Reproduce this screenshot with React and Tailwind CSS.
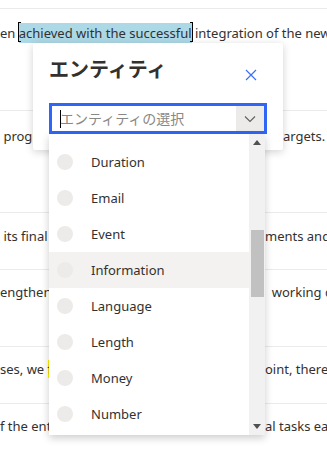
import React from 'react';

const rows = [
  { h: 'h-[102px]', pt: 'pt-[14px]', full: true },
  { h: 'h-[102px]', pt: 'pt-[15px]', left: ' progress toward', lw: 'w-[33px]', right: 'argets. The team', rw: 'w-[44px]' },
  { h: 'h-[57px]', pt: 'pt-[13px]', left: ' its final', lw: 'w-[49px]', right: 'ments and confirmed', rw: 'w-[62px]' },
  { h: 'h-[77px]', pt: 'pt-[12px]', left: 'engthened', lw: 'w-[49px]', right: '  working cl', rw: 'w-[62px]' },
  { h: 'h-[57px]', pt: 'pt-[12px]', left: 'ses, we ', lw: 'w-[49px]', mark: true, right: 'oint, there', rw: 'w-[62px]' },
  { h: 'h-[48px]', pt: 'pt-[12px]', left: 'f the entire', lw: 'w-[49px]', right: 'al tasks eas', rw: 'w-[62px]' },
];

const items = ['Duration', 'Email', 'Event', 'Information', 'Language', 'Length', 'Money', 'Number'];

const App = () => {
  return (
    <div className="relative w-[327px] h-[451px] overflow-hidden bg-white text-[#323130] font-['Noto_Sans',sans-serif] text-[13px] leading-[20px]">
      {/* Document rows behind the panel */}
      <div className="pt-[8px]">
        {rows.map((row, i) => (
          <div key={i} className={`border-t border-[#edebe9] ${row.h} ${row.pt} whitespace-pre overflow-hidden`}>
            {row.full ? (
              <p>
                en{' '}
                <span className="relative bg-[#add8e6] py-[1px]">
                  <span className="absolute -left-[1px] -top-[1px] h-[20px] w-[3px] border-l border-y border-black" />
                  achieved with the successful
                  <span className="absolute -right-[1px] -top-[1px] h-[20px] w-[3px] border-r border-y border-black" />
                </span>{' '}
                integration of the new
              </p>
            ) : (
              <p className="flex justify-between">
                <span className={`${row.lw} overflow-hidden`}>
                  {row.left}
                  {row.mark && <span className="bg-[#fff100]">found</span>}
                </span>
                <span className={`${row.rw} overflow-hidden`}>{row.right}</span>
              </p>
            )}
          </div>
        ))}
      </div>

      {/* Entity panel */}
      <div className="absolute left-[33px] top-[43px] w-[250px] h-[107px] bg-white rounded-[2px] shadow-[0_2px_8px_rgba(0,0,0,0.18)] px-[16px]">
        <div className="flex items-start justify-between h-[28px] mt-[13px]">
          <h2 className="text-[20px] leading-[28px] font-bold text-[#323130] font-['Noto_Sans','Noto_Sans_CJK_JP',sans-serif]">
            エンティティ
          </h2>
          <button className="w-[24px] h-[24px] flex items-center justify-center mt-[7px] mr-[4px]">
            <svg width="12" height="12" viewBox="0 0 12 12">
              <path d="M1 1L11 11M11 1L1 11" stroke="#3b6ff5" strokeWidth="1.2" />
            </svg>
          </button>
        </div>
        <div className="mt-[19px] h-[31px] border-[3px] border-[#2f66f5] flex items-stretch bg-white">
          <div className="flex-1 flex items-center pl-[8px] text-[#8a8886] text-[14px] font-['Noto_Sans','Noto_Sans_CJK_JP',sans-serif]">
            <span className="w-px h-[18px] bg-black mr-[-1px]" />
            エンティティの選択
          </div>
          <div className="w-[28px] bg-[#edebe9] flex items-center justify-center">
            <svg width="12" height="8" viewBox="0 0 12 8">
              <path d="M1 1.5L6 6.5L11 1.5" fill="none" stroke="#605e5c" strokeWidth="1.1" />
            </svg>
          </div>
        </div>
      </div>

      {/* Dropdown list */}
      <div className="absolute left-[49px] top-[134px] w-[216px] h-[301px] bg-white shadow-[0_3px_8px_rgba(0,0,0,0.2)] flex">
        <ul className="flex-1 pt-[10px] overflow-hidden">
          {items.map((item) => (
            <li
              key={item}
              className={`h-[36px] flex items-center pl-[8px] ${item === 'Information' ? 'bg-[#f3f2f1]' : ''}`}
            >
              <span className="w-[16px] h-[16px] rounded-full bg-[#edebe9] mr-[18px]" />
              <span className="text-[13px] text-[#323130]">{item}</span>
            </li>
          ))}
        </ul>
        <div className="w-[16px] bg-[#f1f1f1] flex flex-col items-center">
          <div className="h-[17px] flex items-center justify-center">
            <svg width="8" height="5" viewBox="0 0 8 5">
              <path d="M0 5L4 0L8 5Z" fill="#505050" />
            </svg>
          </div>
          <div className="w-[13px] h-[67px] bg-[#c1c1c1] mt-[79px]" />
          <div className="flex-1" />
          <div className="h-[17px] flex items-center justify-center">
            <svg width="8" height="5" viewBox="0 0 8 5">
              <path d="M0 0L4 5L8 0Z" fill="#505050" />
            </svg>
          </div>
        </div>
      </div>
    </div>
  );
};

export default App;
